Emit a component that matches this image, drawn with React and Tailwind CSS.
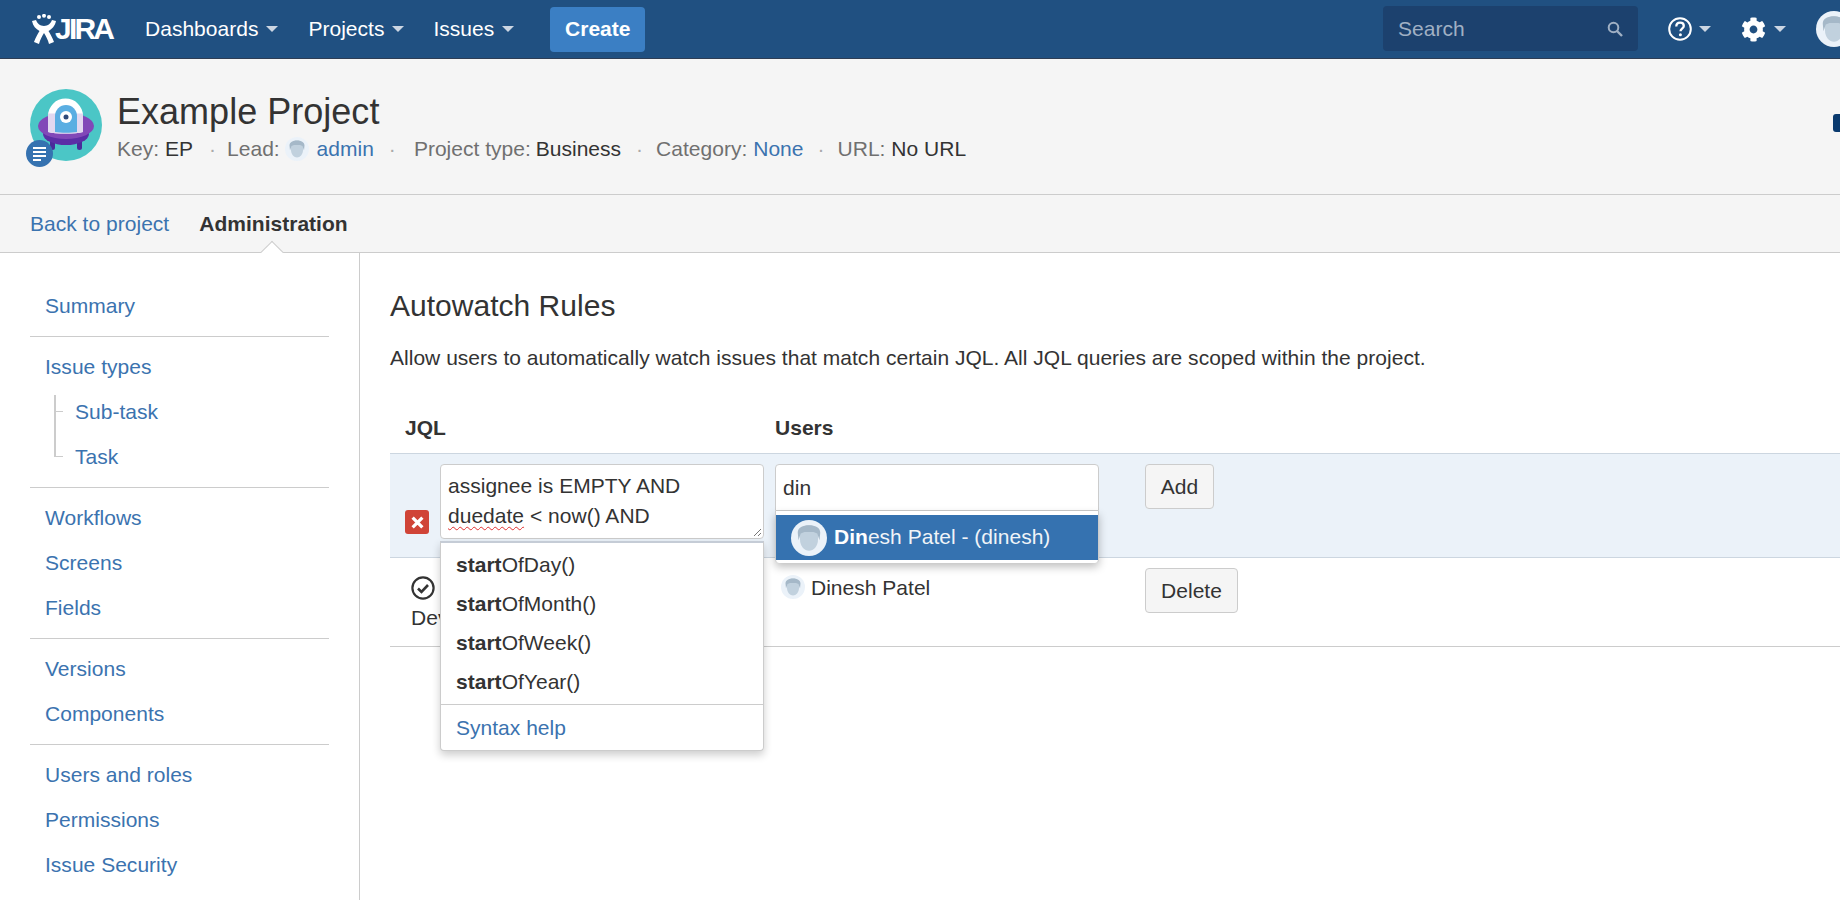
import React from 'react'
import { FaCog } from 'react-icons/fa'

const Caret = ({ className = '' }) => (
  <span className={`inline-block w-0 h-0 border-x-[6px] border-x-transparent border-t-[6px] ${className}`} />
)

const UserAvatar = ({ className = '' }) => (
  <svg viewBox="0 0 48 48" className={className}>
    <circle cx="24" cy="24" r="24" fill="#ebf2f9" />
    <path d="M12 20c0-9 5-13 12-13s12 4 12 13v6c0 9-6 15-12 15s-12-6-12-15z" fill="#c1d1de" />
    <path d="M10 27l-1-10c0-7 7-10 15-10s15 3 15 10l-1 10-3-9-5-2H18l-5 2z" fill="#a5b8c8" />
  </svg>
)

const ProjectAvatar = () => (
  <div className="relative w-[72px] h-[72px] shrink-0">
    <svg viewBox="0 0 72 72" className="w-[72px] h-[72px]">
      <circle cx="36" cy="36" r="36" fill="#4bc6c6" />
      <rect x="20" y="46" width="5" height="15" rx="2.500" fill="#4a2a9a" />
      <rect x="47" y="46" width="5" height="15" rx="2.500" fill="#4a2a9a" />
      <ellipse cx="36" cy="45" rx="23" ry="11" fill="#5b2ea6" />
      <ellipse cx="36" cy="37" rx="28" ry="13" fill="#8148b8" />
      <path d="M18 43V27a17.500 17.500 0 0 1 35 0v16c-4 1-10 1.500-17.500 1.500S22 44 18 43z" fill="#ffffff" />
      <path d="M18 24.500V43c4 1 10 1.500 17.500 1.500S49 44 53 43V24.500z" fill="#e2d8f0" />
      <path d="M25 27a11 11 0 0 1 22 0v16c-3 .5-7 .7-11 .7s-8-.2-11-.7z" fill="#5aaee2" />
      <circle cx="36" cy="28" r="6" fill="#ffffff" />
      <circle cx="36" cy="28" r="2.500" fill="#2f4a7a" />
    </svg>
    <div className="absolute left-[-4px] top-[51px] w-[27px] h-[27px] rounded-full bg-[#3572b0] flex flex-col justify-center gap-[2px] pl-[7px]">
      <div className="w-[13px] h-[2px] bg-white" />
      <div className="w-[13px] h-[2px] bg-white" />
      <div className="w-[13px] h-[2px] bg-white" />
      <div className="w-[8px] h-[2px] bg-white" />
    </div>
  </div>
)

const Logo = () => (
  <div className="flex items-center ml-[32px] w-[113px] shrink-0">
    <svg viewBox="0 0 24 30" className="w-[24px] h-[30px] shrink-0">
      <g fill="#ffffff">
        <circle cx="7" cy="3" r="2" />
        <circle cx="12" cy="1.800" r="2" />
        <circle cx="17" cy="3" r="2" />
        <path d="M0 7l4-1c1 3 4 6 8 6s7-3 8-6l4 1c-1 5-4 8-7.500 10 2 3 4 7 5.500 11l-5 2c-1-4-3-8-5-11-2 3-4 7-5 11l-5-2c1.500-4 3.500-8 5.500-11C3.900 15 1 12 0 7z" />
      </g>
    </svg>
    <span className="-ml-[1px] text-[30px] leading-[30px] font-bold text-white tracking-[-2.800px]">JIRA</span>
  </div>
)

const NavItem = ({ label, className = '' }) => (
  <div className={`flex items-center text-white ${className}`}>
    <span>{label}</span>
    <Caret className="ml-[8px] border-t-[#ccd6e3]" />
  </div>
)

const Dot = ({ className = '' }) => <span className={`text-[#aaa] ${className}`}>·</span>

const sideGroups = [
  [{ label: 'Summary' }],
  [{ label: 'Issue types' }, { label: 'Sub-task', child: true }, { label: 'Task', child: true }],
  [{ label: 'Workflows' }, { label: 'Screens' }, { label: 'Fields' }],
  [{ label: 'Versions' }, { label: 'Components' }],
  [{ label: 'Users and roles' }, { label: 'Permissions' }, { label: 'Issue Security' }],
]

const Sidebar = () => (
  <div className="w-[360px] shrink-0 border-r border-[#ccc] pt-[23px] pl-[30px] pr-[30px]">
    {sideGroups.map((group, i) => (
      <div key={i} className={`pt-[7px] pb-[8px] ${i < sideGroups.length - 1 ? 'border-b border-[#ccc]' : ''}`}>
        {group.map((item) => (
          <div key={item.label} className={`relative h-[45px] flex items-center text-[#3b73af] ${item.child ? 'pl-[45px]' : 'pl-[15px]'}`}>
            {item.child && (
              <div
                className={`absolute left-[24px] w-[9px] border-l-2 border-[#ccc] ${
                  item.label === 'Task' ? 'top-0 h-[23px] border-b' : 'top-[6px] h-[39px]'
                }`}
              />
            )}
            {item.label === 'Sub-task' && <div className="absolute left-[26px] top-[22px] w-[7px] border-t border-[#ccc]" />}
            {item.label}
          </div>
        ))}
      </div>
    ))}
  </div>
)

const startItems = ['OfDay()', 'OfMonth()', 'OfWeek()', 'OfYear()']

const JqlCell = () => (
  <div className="flex pl-[15px] pt-[10px]">
    <div className="mt-[46px] w-[24px] h-[24px] rounded-[3px] bg-[#d04437] flex items-center justify-center shrink-0">
      <svg viewBox="0 0 12 12" className="w-[13px] h-[13px]">
        <path d="M1.500 1.500l9 9M10.500 1.500l-9 9" stroke="#fff" strokeWidth="3" />
      </svg>
    </div>
    <div className="relative ml-[11px] w-[324px]">
      <div className="relative h-[75px] bg-white border border-[#ccc] rounded-[4px] pl-[7px] pt-[6px]">
        <div>assignee is EMPTY AND</div>
        <div>
          <span className="underline decoration-wavy decoration-[#e03030] decoration-1 underline-offset-[3px]">duedate</span> &lt; now() AND
        </div>
        <svg viewBox="0 0 9 9" className="absolute right-[1px] bottom-[1px] w-[9px] h-[9px]">
          <path d="M1 8l7-7M5 8l3-3" stroke="#777" strokeWidth="1" />
        </svg>
      </div>
      <div className="absolute left-0 top-[77px] z-10 w-[324px] bg-white border border-[#ccc] border-t-2 border-t-[#c5ccd6] rounded-b-[4px] shadow-[0_4px_8px_rgba(0,0,0,0.2)]">
        <div className="pt-[2px] pb-[3px] border-b border-[#ccc]">
          {startItems.map((s) => (
            <div key={s} className="h-[39px] flex items-center pl-[15px]">
              <b>start</b>
              {s}
            </div>
          ))}
        </div>
        <div className="h-[45px] flex items-center pl-[15px] text-[#3b73af]">Syntax help</div>
      </div>
    </div>
  </div>
)

const UsersCell = () => (
  <div className="relative w-[324px] mt-[10px]">
    <div className="h-[47px] bg-white border border-[#ccc] rounded-t-[4px] flex items-center pl-[7px]">din</div>
    <div className="absolute left-0 top-[47px] z-10 w-[324px] bg-white pt-[4px] pb-[3px] rounded-b-[4px] border-x border-[#ccc] shadow-[0_4px_8px_rgba(0,0,0,0.25)]">
      <div className="h-[45px] bg-[#3572b0] flex items-center pl-[15px] text-[#f0f4f8]">
        <UserAvatar className="w-[36px] h-[36px]" />
        <span className="ml-[7px] -mt-[1px]">
          <b className="text-white">Din</b>esh Patel - (dinesh)
        </span>
      </div>
    </div>
  </div>
)

const Button = ({ children, className = '' }) => (
  <div className={`h-[45px] flex items-center justify-center bg-[#f5f5f5] border border-[#ccc] rounded-[4px] ${className}`}>{children}</div>
)

const RulesTable = () => (
  <div className="mt-[40px] text-[#333]">
    <div className="grid grid-cols-[385px_370px_1fr] pb-[10px] font-bold">
      <div className="pl-[15px]">JQL</div>
      <div>Users</div>
    </div>
    <div className="grid grid-cols-[385px_370px_1fr] h-[105px] bg-[#ebf2f9] border-y border-[#ccd6e0]">
      <JqlCell />
      <UsersCell />
      <div className="pt-[10px]">
        <Button className="w-[69px]">Add</Button>
      </div>
    </div>
    <div className="grid grid-cols-[385px_370px_1fr] h-[89px] border-b border-[#ccc]">
      <div className="pl-[21px] pt-[18px]">
        <svg viewBox="0 0 24 24" className="w-[24px] h-[24px]">
          <circle cx="12" cy="12" r="10.600" fill="none" stroke="#333" strokeWidth="2.200" />
          <path d="M7 12.500l3.500 3.500L17 9" fill="none" stroke="#333" strokeWidth="2.600" />
        </svg>
        <div className="mt-[3px]">Dev</div>
      </div>
      <div className="flex items-start pl-[6px] pt-[15px]">
        <UserAvatar className="w-[24px] h-[24px] mt-[2px]" />
        <span className="ml-[6px]">Dinesh Patel</span>
      </div>
      <div className="pt-[10px]">
        <Button className="w-[93px]">Delete</Button>
      </div>
    </div>
  </div>
)

export default function App() {
  return (
    <div className="w-[1840px] h-[900px] overflow-hidden bg-white text-[21px] leading-[30px] tracking-[0.02px] text-[#333] font-['Liberation_Sans',Arial,sans-serif]">
      {/* top nav */}
      <div className="h-[59px] bg-[#205081] border-b border-[#2e3d54] flex items-center">
        <Logo />
        <NavItem label="Dashboards" />
        <NavItem label="Projects" className="ml-[30px]" />
        <NavItem label="Issues" className="ml-[29px]" />
        <div className="ml-[36px] w-[95px] h-[45px] rounded-[4px] bg-[#3b7fc4] text-white font-bold flex items-center justify-center">Create</div>
        <div className="ml-auto mr-[-12px] flex items-center">
          <div className="w-[255px] h-[45px] -mt-[1px] rounded-[4px] bg-[#1c416e] flex items-center justify-between pl-[15px] pr-[15px] text-[#a0b0c4]">
            <span>Search</span>
            <svg viewBox="0 0 16 16" className="w-[16px] h-[16px]" fill="none" stroke="#a0b0c4">
              <circle cx="6.500" cy="6.500" r="4.800" strokeWidth="2" />
              <path d="M10 10l5 5" strokeWidth="2.400" />
            </svg>
          </div>
          <svg viewBox="0 0 24 24" className="ml-[30px] w-[24px] h-[24px]" fill="none">
            <circle cx="12" cy="12" r="10.800" stroke="#fff" strokeWidth="2" />
            <path d="M8.300 9.500c0-2.400 1.700-3.800 3.800-3.800s3.700 1.300 3.700 3.300c0 2.600-3.300 2.800-3.300 5.200" stroke="#fff" strokeWidth="2.300" />
            <circle cx="12.400" cy="17.800" r="1.500" fill="#fff" />
          </svg>
          <Caret className="ml-[7px] border-t-[#ccd6e3]" />
          <FaCog className="ml-[30px] w-[25px] h-[25px] text-white" />
          <Caret className="ml-[8px] border-t-[#ccd6e3]" />
          <UserAvatar className="ml-[30px] w-[36px] h-[36px] shrink-0" />
        </div>
      </div>

      {/* project header */}
      <div className="h-[136px] bg-[#f5f5f5] border-b border-[#ccc] flex pl-[30px] pt-[30px]">
        <ProjectAvatar />
        <div className="ml-[15px]">
          <div className="text-[36px] leading-[45px]">Example Project</div>
          <div className="flex items-center whitespace-pre text-[#707070]">
            <span>Key: </span>
            <span className="text-[#333]">EP</span>
            <Dot className="ml-[16px]" />
            <span className="ml-[11px]">Lead: </span>
            <UserAvatar className="-ml-[1px] w-[24px] h-[24px]" />
            <span className="ml-[8px] text-[#3b73af]">admin</span>
            <Dot className="ml-[15px]" />
            <span className="ml-[18px]">Project type: </span>
            <span className="-ml-[1px] text-[#333]">Business</span>
            <Dot className="ml-[15px]" />
            <span className="ml-[13px]">Category: </span>
            <span className="text-[#3b73af]">None</span>
            <Dot className="ml-[14px]" />
            <span className="ml-[13px]">URL: </span>
            <span className="text-[#333]">No URL</span>
          </div>
        </div>
        <div className="ml-auto mt-[25px] w-[7px] h-[18px] bg-[#0a3a6e] rounded-l-[3px]" />
      </div>

      {/* tabs */}
      <div className="h-[58px] bg-[#f5f5f5] border-b border-[#ccc] flex items-center pl-[30px]">
        <span className="text-[#3b73af]">Back to project</span>
        <span className="relative ml-[30px] font-bold">
          Administration
          <span className="absolute left-[65px] top-[35px] w-[16px] h-[16px] rotate-45 bg-white border-l border-t border-[#ccc]" />
        </span>
      </div>

      <div className="flex h-[648px]">
        <Sidebar />
        <div className="flex-1 pl-[30px] pt-[30px]">
          <div className="text-[30px] leading-[45px]">Autowatch Rules</div>
          <div className="mt-[15px]">Allow users to automatically watch issues that match certain JQL. All JQL queries are scoped within the project.</div>
          <RulesTable />
        </div>
      </div>
    </div>
  )
}
